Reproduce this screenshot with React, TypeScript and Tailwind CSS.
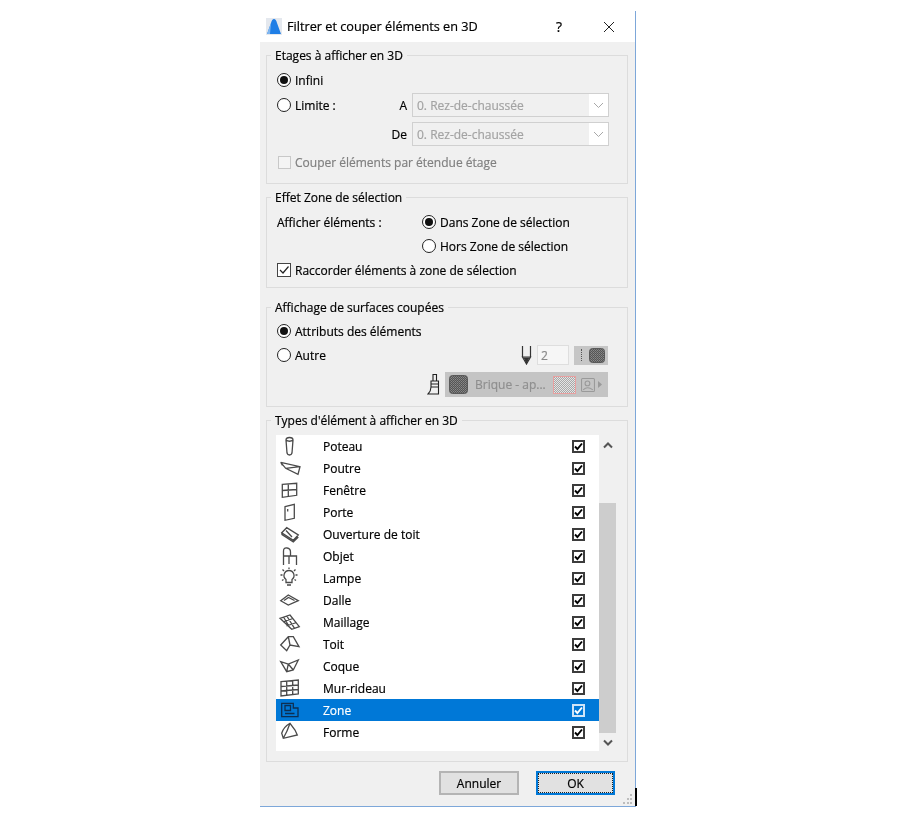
import type { ReactNode } from 'react';

const uiFont = "font-['Open_Sans','Noto_Sans',sans-serif]";

function Radio({ checked }: { checked?: boolean }) {
  return (
    <span className="w-[14px] h-[14px] rounded-full border border-[#222] bg-white flex items-center justify-center shrink-0">
      {checked && <span className="w-2 h-2 rounded-full bg-[#111]" />}
    </span>
  );
}

function Label({ children, className = '' }: { children: ReactNode; className?: string }) {
  return <span className={`pt-[2px] whitespace-nowrap ${className}`}>{children}</span>;
}

function RowCheck({ light }: { light?: boolean }) {
  return (
    <span
      className={`w-[13px] h-[13px] border-2 flex items-center justify-center shrink-0 ${
        light ? 'border-[#cfe4f7] bg-[#0078d7]' : 'border-[#3c3c3c] bg-white'
      }`}
    >
      <svg width="9" height="9" viewBox="0 0 9 9" fill="none">
        <path d="M1 4.5 L3.4 7 L8 1.5" stroke={light ? '#fff' : '#000'} strokeWidth="1.9" />
      </svg>
    </span>
  );
}

function Group({ title, className, children }: { title: string; className: string; children: ReactNode }) {
  return (
    <div className={`relative w-[362px] border border-[#dcdcdc] ${className}`}>
      <span className="absolute -top-[9px] left-[4px] bg-[#f0f0f0] px-[4px] text-[12px] leading-[17px] whitespace-nowrap">
        {title}
      </span>
      {children}
    </div>
  );
}

function SelectBox() {
  return (
    <div className="w-[197px] h-6 border border-[#d0d0d0] bg-white flex">
      <div className="flex-1 bg-[#f0f0f0] pl-[4px] text-[12px] leading-[24px] text-[#a3a3a3]">0. Rez-de-chaussée</div>
      <div className="w-[19px] flex items-center justify-center">
        <svg width="11" height="7" viewBox="0 0 11 7" fill="none">
          <path d="M1 1 L5.5 5.5 L10 1" stroke="#a8a8a8" />
        </svg>
      </div>
    </div>
  );
}

function Dither({ w, h, light, id }: { w: number; h: number; light?: boolean; id: string }) {
  return (
    <svg width={w} height={h} className="block">
      <defs>
        <pattern id={id} width="2" height="2" patternUnits="userSpaceOnUse">
          <rect width="2" height="2" fill={light ? '#e4e4e4' : '#555'} />
          <rect width="1" height="1" fill={light ? '#a8a8a8' : '#8a8a8a'} />
          <rect x="1" y="1" width="1" height="1" fill={light ? '#a8a8a8' : '#7a7a7a'} />
        </pattern>
      </defs>
      <rect
        x="0.5"
        y="0.5"
        width={w - 1}
        height={h - 1}
        rx={light ? 0 : 3}
        fill={`url(#${id})`}
        stroke={light ? '#e8a0a0' : '#5a5a5a'}
      />
    </svg>
  );
}

// 24x22 boxes, same size as a list row
const iconPaths: Record<string, ReactNode> = {
  Poteau: <path d="M8 5 Q8 2.5 11.5 2.5 Q15 2.5 15 5 L14 18 Q13.5 20 11.5 20 Q9.5 20 9 18 Z M8 5 Q11.5 7.5 15 5" />,
  Poutre: <path d="M2.7 5.3 L22 9.7 L20 17.3 L7.7 11.3 L2.7 5.3 M7.7 11.3 L22 9.7 M2.7 5.3 L4.5 8.5" />,
  'Fenêtre': <path d="M4.3 5.3 L18.7 4.3 V16.3 L4.3 18.3 Z M10.3 5 V17.5 M4.3 11.5 L18.7 10.5" />,
  Porte: <path d="M7 5.7 L16.3 3.3 V17.3 L7 19.3 Z M9.7 8 V10.5" />,
  'Ouverture de toit': <path d="M3.7 9.7 L8.7 4.7 L20.3 12 L15.3 17.3 Z M8 7.5 L14 14 M3.7 9.7 L4 11.5 L15.3 19 L20.3 14" />,
  Objet: <path d="M5.5 20 V6 Q5.5 2.5 9 3 Q12.5 3.5 12.5 7 V11 H5.5 M5.5 11 H18.5 V20 M11 11 V19" />,
  Lampe: (
    <path d="M11 3.5 A5 5 0 0 1 14 12.5 V15.5 H8 V12.5 A5 5 0 0 1 11 3.5 Z M9 18 H13 M11 0.5 V2 M2.5 8 H4.5 M17.5 8 H19.5 M4.5 2.5 L6 4 M17.5 2.5 L16 4 M4 13.5 L5.5 12.5 M18 13.5 L16.5 12.5" />
  ),
  Dalle: <path d="M2.7 11.7 L10.3 6 L20.3 11.7 L10.3 16 Z M6 11.5 L10.5 8.5 L16.5 11.5" />,
  Maillage: <path d="M2 7.3 L12 4 L21.3 15.7 L13.7 18.3 Z M5 11 L15 7.5 M8.5 15 L18.5 11.5 M5.5 6 L12 17 M8.8 5 L16.5 17.3" />,
  Toit: <path d="M2.7 12 L10.3 3.7 H15.3 L21 13.7 L12 12 L8.7 17.7 Z M12 12 L10.3 3.7" />,
  Coque: <path d="M2.7 6.7 L8.7 16.7 L15.3 15 L20.3 5 L10.3 9 Z M10.3 9 L8.7 16.7 M10.3 9 L15.3 15" />,
  'Mur-rideau': <path d="M3 4.7 L20.3 3 V17 L3 19 Z M8.7 4.2 V18.3 M14.7 3.6 V17.7 M3 9.5 L20.3 8 M3 14 L20.3 12.5" />,
  Zone: <path d="M3.7 4.3 H15.3 V9 H20 V17.7 H3.7 Z M7 6.5 H12.5 V11.5 H7 Z M7 14.5 H16.5" />,
  Forme: <path d="M12 2.3 Q5.5 6 3.7 12.3 L5.3 17.3 L19.3 14 L17 9 Z M12 2.3 Q9.5 10 5.3 17.3" />,
};

const items = [
  'Poteau',
  'Poutre',
  'Fenêtre',
  'Porte',
  'Ouverture de toit',
  'Objet',
  'Lampe',
  'Dalle',
  'Maillage',
  'Toit',
  'Coque',
  'Mur-rideau',
  'Zone',
  'Forme',
];

function ElementRow({ label }: { label: string }) {
  const selected = label === 'Zone';
  return (
    <div className={`h-[22px] flex items-center ${selected ? 'bg-[#0078d7] text-white' : ''}`}>
      <svg
        width="24"
        height="22"
        viewBox="0 0 24 22"
        fill="none"
        stroke={selected ? '#0d2f52' : '#4a4a4a'}
        strokeWidth="1.3"
        className="ml-[2px] shrink-0"
      >
        {iconPaths[label]}
      </svg>
      <span className="ml-[21px] pt-[2px] text-[12px] flex-1">{label}</span>
      <span className="mr-[14px] flex">
        <RowCheck light={selected} />
      </span>
    </div>
  );
}

export default function App() {
  return (
    <div className={`w-[916px] h-[821px] bg-white pt-[11px] pl-[260px] ${uiFont}`}>
      <div className="relative w-[376px] h-[796px] border-r border-b border-[#7da7d9] flex flex-col blur-[0.35px] text-[#000] [-webkit-text-stroke:0.2px]">
        <div className="h-[31px] shrink-0 bg-white flex items-center pl-[6px]">
          <svg width="16" height="17" viewBox="0 0 16 17" className="shrink-0">
            <rect width="16" height="17" fill="#e4e8ee" />
            <path d="M1 16 L5 5 Q6 1 8 1 Q10 1 11 5 L15 16 Z" fill="#1f7ee6" />
            <path d="M1 16 L5 5 L4 16 Z" fill="#7fb6f0" />
          </svg>
          <span className="ml-[5px] text-[12.7px] flex-1">Filtrer et couper éléments en 3D</span>
          <span className="text-[14px] mr-[41px]">?</span>
          <svg width="12" height="12" viewBox="0 0 12 12" fill="none" className="mr-[20px]">
            <path d="M1 1 L11 11 M11 1 L1 11" stroke="#222" />
          </svg>
        </div>

        <div className="flex-1 bg-[#f0f0f0] pl-[6px] text-[12px]">
          <Group title="Etages à afficher en 3D" className="mt-[13px] h-[129px] pl-[10px] pr-[18px] pt-3">
            <div className="h-6 flex items-center gap-[4px]">
              <Radio checked />
              <Label>Infini</Label>
            </div>
            <div className="mt-[1px] h-6 flex items-center gap-[4px]">
              <Radio />
              <Label>Limite :</Label>
              <Label className="ml-auto mr-[1px]">A</Label>
              <SelectBox />
            </div>
            <div className="mt-[5px] h-6 flex items-center justify-end gap-[5px]">
              <Label>De</Label>
              <SelectBox />
            </div>
            <div className="mt-1 h-6 flex items-center gap-[4px] text-[#808080]">
              <span className="w-[13px] h-[13px] border border-[#c8c8c8] bg-[#f4f4f4] ml-[1px]" />
              <Label>Couper éléments par étendue étage</Label>
            </div>
          </Group>

          <Group title="Effet Zone de sélection" className="mt-[13px] h-[91px] pl-[10px] pt-3">
            <div className="h-6 flex items-center">
              <Label className="w-[145px]">Afficher éléments :</Label>
              <Radio checked />
              <Label className="ml-[4px]">Dans Zone de sélection</Label>
            </div>
            <div className="h-6 flex items-center pl-[145px]">
              <Radio />
              <Label className="ml-[4px]">Hors Zone de sélection</Label>
            </div>
            <div className="h-6 flex items-center gap-[4px]">
              <span className="w-[14px] h-[14px] border border-[#444] bg-white flex items-center justify-center">
                <svg width="12" height="12" viewBox="0 0 12 12" fill="none">
                  <path d="M2 6 L5 9 L10.5 2.5" stroke="#222" strokeWidth="1.2" />
                </svg>
              </span>
              <Label>Raccorder éléments à zone de sélection</Label>
            </div>
          </Group>

          <Group title="Affichage de surfaces coupées" className="mt-[19px] h-[100px] pl-[10px] pr-[19px] pt-[11px]">
            <div className="h-6 flex items-center gap-[4px]">
              <Radio checked />
              <Label>Attributs des éléments</Label>
            </div>
            <div className="h-6 flex items-center gap-[4px]">
              <Radio />
              <Label>Autre</Label>
              <svg width="11" height="20" viewBox="0 0 11 20" fill="none" stroke="#333" strokeWidth="1.2" className="ml-auto">
                <path d="M1.5 1 V12 H9.5 V1 M1.5 12 L5.5 19 L9.5 12 Z" />
                <path d="M3.5 13 L5.5 18 L7.5 13 Z" fill="#333" />
              </svg>
              <div className="w-[32px] h-5 ml-[1px] border border-[#dedede] bg-[#f6f6f6] pl-[3px] text-[12px] leading-[19px] text-[#8a8a8a]">
                2
              </div>
              <div className="w-[34px] h-[19px] ml-[1px] bg-[#c6c6c6] flex items-center pl-[7px] gap-[7px]">
                <span className="w-px h-3 border-l border-dotted border-[#555]" />
                <Dither w={16} h={15} id="lineFill" />
              </div>
            </div>
            <div className="mt-[5px] h-[25px] flex items-center justify-end gap-[3px]">
              <svg width="15" height="23" viewBox="0 0 15 23" fill="none" stroke="#222" strokeWidth="1.1">
                <path d="M6 1.5 H9.5 V8 H6 Z M4 8 H11.5 V14 H4 Z M4 11 H11.5 M4 14 H11.5 V21 H1 Q4 18 4 14 Z" />
              </svg>
              <div className="w-[163px] h-[25px] bg-[#c4c4c4] flex items-center pl-[4px]">
                <Dither w={19} h={19} id="brickFg" />
                <span className="ml-[7px] w-[72px] text-[12px] text-[#8f8f8f] whitespace-nowrap pt-[1px]">Brique - ap...</span>
                <span className="ml-[6px] flex">
                  <Dither w={23} h={18} light id="brickBg" />
                </span>
                <svg width="14" height="14" viewBox="0 0 13 13" fill="none" stroke="#9a9a9a" className="ml-[5px]">
                  <rect x="0.5" y="0.5" width="12" height="12" rx="1" />
                  <circle cx="6" cy="5" r="2.2" />
                  <path d="M2 11 Q6 7 11 11" />
                </svg>
                <svg width="4" height="7" viewBox="0 0 4 7" className="ml-[3px]">
                  <path d="M0 0 L4 3.5 L0 7 Z" fill="#9a9a9a" />
                </svg>
              </div>
            </div>
          </Group>

          <Group title="Types d'élément à afficher en 3D" className="mt-[13px] h-[342px] pl-[9px] pt-[14px]">
            <div className="flex">
              <div className="w-[323px] h-[316px] bg-white">
                {items.map(item => (
                  <ElementRow key={item} label={item} />
                ))}
              </div>
              <div className="w-[17px] h-[316px] flex flex-col">
                <div className="h-[68px] pt-[7px] flex justify-center">
                  <svg width="10" height="7" viewBox="0 0 10 7" fill="none">
                    <path d="M1 5.5 L5 1.5 L9 5.5" stroke="#555" strokeWidth="2" />
                  </svg>
                </div>
                <div className="h-[230px] bg-[#cdcdcd]" />
                <div className="pt-[6px] flex justify-center">
                  <svg width="10" height="7" viewBox="0 0 10 7" fill="none">
                    <path d="M1 1.5 L5 5.5 L9 1.5" stroke="#555" strokeWidth="2" />
                  </svg>
                </div>
              </div>
            </div>
          </Group>

          <div className="mt-[9px] flex gap-[17px] pl-[173px]">
            <button className="w-[80px] h-6 pt-[1px] bg-[#e1e1e1] border-2 border-[#b4b4b4] text-[12px]">Annuler</button>
            <button className="w-[79px] h-6 bg-[#e1e1e1] border-2 border-[#0078d7] text-[12px] flex items-center justify-center">
              <span className="w-full h-full pt-[1px] border border-dotted border-[#222] flex items-center justify-center">OK</span>
            </button>
          </div>
        </div>

        <svg width="11" height="10" viewBox="0 0 11 10" className="absolute right-[2px] bottom-[2px]">
          <path d="M8 0 h2 v2 h-2 Z M5 4 h2 v2 h-2 Z M8 4 h2 v2 h-2 Z M1 8 h2 v2 h-2 Z M5 8 h2 v2 h-2 Z M8 8 h2 v2 h-2 Z" fill="#bdbdbd" />
        </svg>
        <span className="absolute -right-[2px] bottom-0 w-[2px] h-[18px] bg-black" />
      </div>
    </div>
  );
}
